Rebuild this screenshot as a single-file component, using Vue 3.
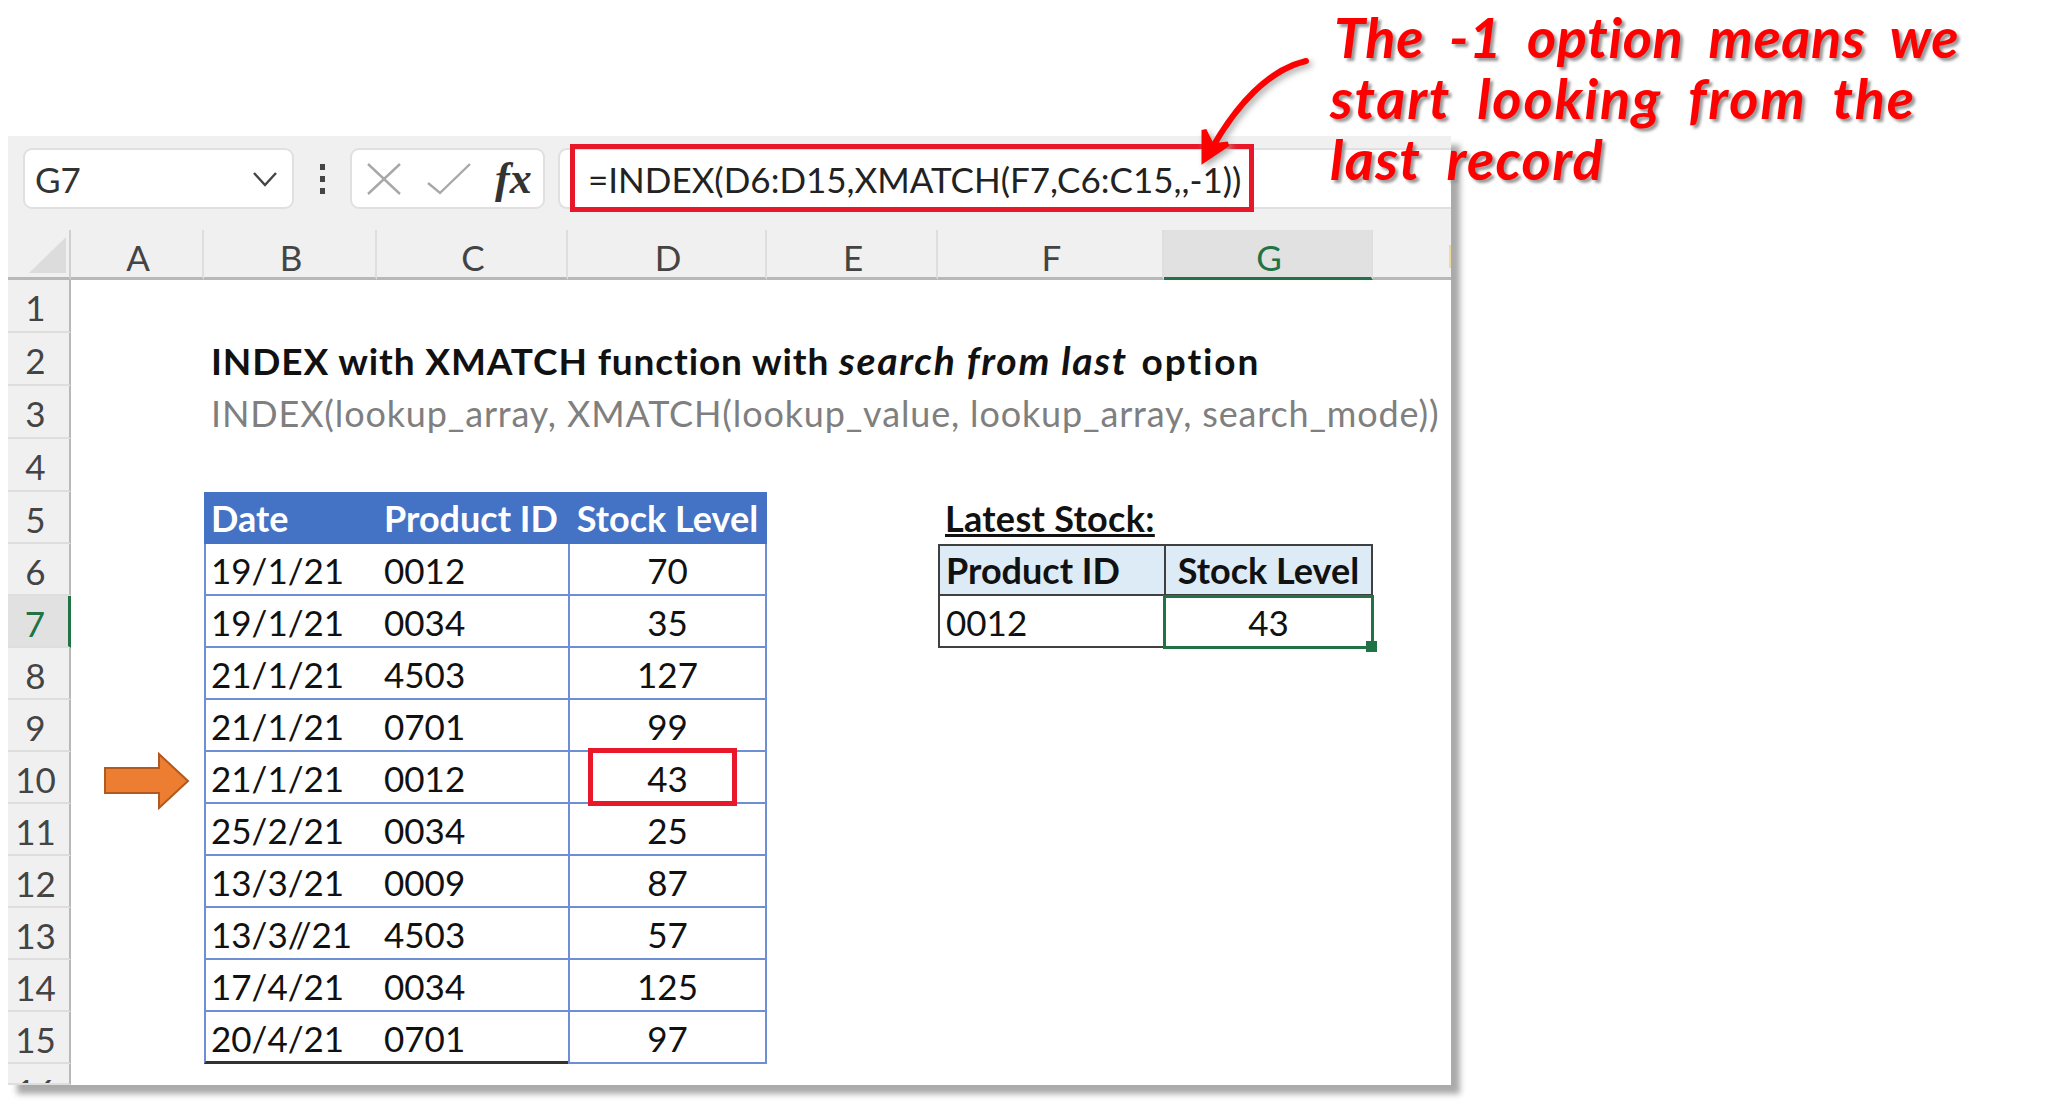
<template>
  <div class="page">
    <div class="window">
      <div class="toolbar">
        <div class="name-box">
          <span>G7</span>
          <svg width="26" height="16" viewBox="0 0 26 16"><path d="M2 2 L13 14 L24 2" fill="none" stroke="#444" stroke-width="2.4" /></svg>
        </div>
        <div class="dots"><i></i><i></i><i></i></div>
        <div class="fx-box">
          <svg width="34" height="32" viewBox="0 0 34 32"><path d="M1 1 L33 31 M33 1 L1 31" fill="none" stroke="#a8a8a8" stroke-width="2.4" /></svg>
          <svg width="44" height="32" viewBox="0 0 44 32"><path d="M1 20 L13 30 L43 1" fill="none" stroke="#a8a8a8" stroke-width="2.4" /></svg>
          <span class="fx">fx</span>
        </div>
        <div class="formula-box">=INDEX(D6:D15,XMATCH(F7,C6:C15,,-1))</div>
      </div>

      <div class="sheet">
        <div class="corner"><span></span></div>
        <div
          v-for="col in columns"
          :key="col"
          class="col-head"
          :class="{ active: col === 'G', blank: col === '' }"
        >{{ col }}</div>

        <div
          v-for="n in 16"
          :key="n"
          class="row-head"
          :class="{ active: n === 7 }"
          :style="{ gridRow: n + 1 }"
        >{{ n }}</div>

        <div class="title">INDEX with XMATCH function with <em>search from last</em>&nbsp; <span class="option">option</span></div>
        <div class="subtitle">INDEX(lookup_array, XMATCH(lookup_value, lookup_array, search_mode))</div>

        <div class="th date">Date</div>
        <div class="th product">Product ID</div>
        <div class="th stock">Stock Level</div>

        <template v-for="(item, i) in stockRows" :key="i">
          <div class="td date" :class="{ last: i === 9 }" :style="{ gridRow: i + 7 }">{{ item.date }}</div>
          <div class="td product" :class="{ last: i === 9 }" :style="{ gridRow: i + 7 }">{{ item.id }}</div>
          <div class="td stock" :style="{ gridRow: i + 7 }">{{ item.level }}</div>
        </template>

        <div class="latest">Latest Stock:</div>
        <div class="lt-head lt-id">Product ID</div>
        <div class="lt-head lt-level">Stock Level</div>
        <div class="lt-cell lt-id">0012</div>
        <div class="lt-cell lt-level selected">43<span class="handle"></span></div>
      </div>

      <div class="formula-mark"></div>
      <div class="cell-mark"></div>
      <svg class="row-arrow" width="86" height="58" viewBox="0 0 86 58">
        <path d="M1 16 H55 V2 L84 29 L55 56 V41 H1 Z" fill="#ed7d31" stroke="#ae5a21" stroke-width="2" />
      </svg>
    </div>

    <div class="note">
      <div class="line-one">The -1 option means we</div>
      <div class="line-two">start looking from the</div>
      <div class="line-three">last record</div>
    </div>
    <svg class="note-arrow" width="130" height="130" viewBox="1190 40 130 130">
      <path d="M1306 61 C1268 70 1236 106 1212 148" fill="none" stroke="#f00" stroke-width="6" stroke-linecap="round" />
      <path d="M1204 130 L1204 160 L1228 144 L1212 146 Z" fill="#f00" stroke="#f00" stroke-width="5" stroke-linejoin="miter" />
    </svg>
  </div>
</template>

<script setup>
const columns = ["A", "B", "C", "D", "E", "F", "G", ""];

const stockRows = [
  { date: "19/1/21", id: "0012", level: 70 },
  { date: "19/1/21", id: "0034", level: 35 },
  { date: "21/1/21", id: "4503", level: 127 },
  { date: "21/1/21", id: "0701", level: 99 },
  { date: "21/1/21", id: "0012", level: 43 },
  { date: "25/2/21", id: "0034", level: 25 },
  { date: "13/3/21", id: "0009", level: 87 },
  { date: "13/3//21", id: "4503", level: 57 },
  { date: "17/4/21", id: "0034", level: 125 },
  { date: "20/4/21", id: "0701", level: 97 },
];
</script>

<style>
html,
body {
  background: #fff;
}
</style>

<style scoped>
.page {
  position: relative;
  height: 1110px;
  padding: 136px 0 0 8px;
  box-sizing: border-box;
  font-family: "Lato", "Liberation Sans", sans-serif;
  font-size: 35px;
  color: #111;
  overflow: hidden;
}

.window {
  position: relative;
  width: 1443px;
  height: 949px;
  background: #fff;
  overflow: hidden;
  box-shadow: 9px 9px 6px #aaa;
}

.toolbar {
  display: flex;
  height: 94px;
  padding-top: 12px;
  box-sizing: border-box;
  background: #f0f0f0;
  align-items: flex-start;
}

.name-box {
  display: flex;
  align-items: center;
  justify-content: space-between;
  width: 271px;
  height: 61px;
  margin-left: 15px;
  padding: 0 14px 0 10px;
  box-sizing: border-box;
  background: #fff;
  border: 2px solid #e0e0e0;
  border-radius: 9px;
  color: #333;
}

.dots {
  display: flex;
  flex-direction: column;
  gap: 6px;
  width: 56px;
  height: 61px;
  align-items: center;
  justify-content: center;
}

.dots i {
  width: 5px;
  height: 6px;
  background: #444;
}

.fx-box {
  display: flex;
  align-items: center;
  width: 195px;
  height: 61px;
  padding-left: 15px;
  gap: 26px;
  box-sizing: border-box;
  background: #fff;
  border: 2px solid #e0e0e0;
  border-radius: 9px;
}

.fx {
  margin-left: -2px;
  font-family: "Liberation Serif", serif;
  font-style: italic;
  font-weight: 700;
  font-size: 44px;
  color: #333;
}

.formula-box {
  flex: 1;
  height: 61px;
  margin-left: 13px;
  padding-left: 28px;
  box-sizing: border-box;
  line-height: 58px;
  background: #fff;
  border: 2px solid #e0e0e0;
  border-right: 0;
  border-radius: 9px 0 0 9px;
  color: #222;
  white-space: nowrap;
}

.sheet {
  display: grid;
  grid-template-columns: 63px 133px 173px 191px 199px 171px 226px 209px 78px;
  grid-template-rows: 50px repeat(4, 53px) repeat(11, 52px) 21px;
}

.corner {
  background: #f0f0f0;
  border-bottom: 3px solid #b8b8b8;
  border-right: 2px solid #cfcfcf;
  box-sizing: border-box;
}

.corner span {
  display: block;
  width: 37px;
  height: 36px;
  margin: 7px 0 0 21px;
  background: #dcdcdc;
  clip-path: polygon(100% 0, 100% 100%, 0 100%);
}

.col-head {
  background: #f0f0f0;
  border-bottom: 3px solid #b8b8b8;
  border-right: 2px solid #dedede;
  box-sizing: border-box;
  padding-left: 3px;
  text-align: center;
  line-height: 54px;
  color: #444;
  overflow: hidden;
}

.col-head.active {
  background: #e1e1e1;
  border-bottom-color: #217346;
  color: #217346;
}

.col-head.blank {
  position: relative;
  border-right: 0;
}

.col-head.blank::after {
  content: "";
  position: absolute;
  right: 0;
  top: 15px;
  width: 2px;
  height: 23px;
  background: #f0d9a0;
}

.row-head {
  grid-column: 1;
  background: #f0f0f0;
  border-right: 2px solid #b8b8b8;
  border-bottom: 2px solid #dedede;
  box-sizing: border-box;
  padding-right: 6px;
  text-align: center;
  line-height: 54px;
  color: #444;
  overflow: hidden;
}

.row-head.active {
  background: #e1e1e1;
  border-right: 3px solid #217346;
  color: #217346;
}

.title,
.subtitle {
  grid-column: 3 / span 7;
  padding-left: 7px;
  white-space: nowrap;
  line-height: 55px;
}

.title {
  grid-row: 3;
  font-size: 37px;
  letter-spacing: 0.88px;
  font-weight: 700;
}

.title em {
  font-size: 39px;
  letter-spacing: 1.7px;
}

.option {
  margin-left: -6px;
  letter-spacing: 1.9px;
}

.subtitle {
  grid-row: 4;
  font-size: 36px;
  letter-spacing: 0.85px;
  color: #7f7f7f;
}

.th,
.td {
  padding-left: 5px;
  box-sizing: border-box;
  line-height: 53px;
  white-space: nowrap;
  border-bottom: 2px solid #6f8fd4;
}

.th {
  grid-row: 6;
  background: #4472c4;
  color: #fff;
  font-size: 36px;
  font-weight: 700;
  border-bottom-color: #4472c4;
}

.date {
  grid-column: 3;
  border-left: 2px solid #6f8fd4;
}

.product {
  grid-column: 4;
  padding-left: 7px;
}

.stock {
  grid-column: 5;
  padding-left: 0;
  text-align: center;
  border-left: 2px solid #6f8fd4;
  border-right: 2px solid #6f8fd4;
}

.th.date,
.th.stock {
  border-color: #4472c4;
}

.td.last {
  border-bottom: 3px solid #333;
}

.latest {
  grid-row: 6;
  grid-column: 7 / span 2;
  align-self: center;
  justify-self: start;
  margin-left: 7px;
  font-size: 36px;
  letter-spacing: 0.3px;
  font-weight: 700;
  text-decoration: underline;
  white-space: nowrap;
}

.lt-id {
  grid-column: 7;
  padding-left: 6px;
  border-left: 2px solid #404040;
}

.lt-level {
  grid-column: 8;
  padding: 0;
  text-align: center;
  border-left: 2px solid #404040;
  border-right: 2px solid #404040;
}

.lt-head,
.lt-cell {
  box-sizing: border-box;
  line-height: 52px;
  white-space: nowrap;
  border-bottom: 2px solid #404040;
}

.lt-head {
  grid-row: 7;
  background: #ddebf7;
  font-size: 36px;
  line-height: 49px;
  font-weight: 700;
  border-top: 2px solid #404040;
}

.lt-cell {
  grid-row: 8;
}

.selected {
  position: relative;
  outline: 3px solid #217346;
  outline-offset: -2px;
}

.handle {
  position: absolute;
  right: -6px;
  bottom: -6px;
  width: 11px;
  height: 11px;
  background: #217346;
}

.formula-mark {
  position: absolute;
  left: 562px;
  top: 8px;
  width: 684px;
  height: 68px;
  box-sizing: border-box;
  border: 5px solid #e8182a;
}

.cell-mark {
  position: absolute;
  left: 580px;
  top: 612px;
  width: 149px;
  height: 58px;
  box-sizing: border-box;
  border: 5px solid #e8182a;
}

.row-arrow {
  position: absolute;
  left: 96px;
  top: 616px;
}

.note {
  position: absolute;
  left: 1334px;
  top: 6px;
  font-size: 56px;
  line-height: 61px;
  font-weight: 700;
  font-style: italic;
  color: #f00;
  word-spacing: 12px;
  letter-spacing: 0.6px;
  white-space: nowrap;
  text-shadow: 3px 3px 3px #999;
}

.line-two,
.line-three {
  margin-left: -4px;
}

.line-two {
  letter-spacing: 1.8px;
}

.line-three {
  letter-spacing: 1.3px;
}

.note-arrow {
  position: absolute;
  left: 1190px;
  top: 40px;
  filter: drop-shadow(3px 3px 3px #aaa);
}
</style>
